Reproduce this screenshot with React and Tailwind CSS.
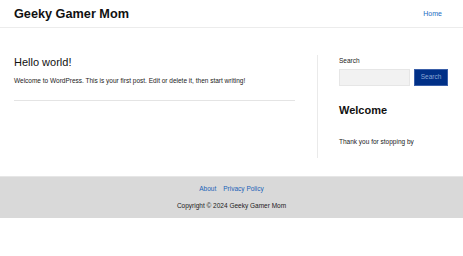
import React from 'react';

const App = () => {
  return (
    <div className="w-[463px] h-[256px] bg-white text-[#1a1a1a]" style={{ fontFamily: '"Liberation Sans", Arial, sans-serif' }}>
      {/* Header */}
      <header className="h-[28px] flex items-center justify-between pl-[14px] pr-[21px] border-b border-[#ececec]">
        <h1 className="text-[12.7px] font-bold leading-none text-[#111] mt-[1px]">Geeky Gamer Mom</h1>
        <nav className="text-[7px] leading-none">
          <a className="text-[#1a6dc2] font-medium">Home</a>
        </nav>
      </header>

      {/* Main */}
      <main className="flex h-[148px] pl-[14px] pr-[15px] pt-[27px]">
        <div className="w-[282px]">
          <h2 className="text-[11px] leading-none text-[#111] pt-[2px]">Hello world!</h2>
          <p className="text-[6.5px] text-[#222] mt-[10px] leading-none">
            Welcome to WordPress. This is your first post. Edit or delete it, then start writing!
          </p>
          <hr className="mt-[15px] border-t border-[#e4e4e4]" />
        </div>
        <aside className="ml-[22px] pl-[21px] border-l border-[#eaeaea] h-[103px] flex-1">
          <label className="block text-[6.5px] text-[#222] leading-none pt-[3px]">Search</label>
          <div className="flex gap-[4px] mt-[4px]">
            <input className="w-[71px] h-[17px] bg-[#f2f2f2] border border-[#e6e6e6]" />
            <button className="w-[34px] h-[17px] bg-[#003087] border border-[#3a5fa8] text-[6.5px] text-[#8ba6d6]">
              Search
            </button>
          </div>
          <h3 className="text-[11px] font-bold leading-none text-[#111] mt-[19px]">Welcome</h3>
          <p className="text-[6.5px] text-[#222] leading-none mt-[23px]">Thank you for stopping by</p>
        </aside>
      </main>

      {/* Footer */}
      <footer className="h-[42px] bg-[#d9d9d9] border-t border-[#e6e6e6] flex flex-col items-center pt-[9px]">
        <div className="flex gap-[7px] text-[6.5px] text-[#1a62b8] font-medium leading-none">
          <a>About</a>
          <a>Privacy Policy</a>
        </div>
        <p className="text-[6.5px] text-[#222] leading-none mt-[10px]">Copyright © 2024 Geeky Gamer Mom</p>
      </footer>
    </div>
  );
};

export default App;
